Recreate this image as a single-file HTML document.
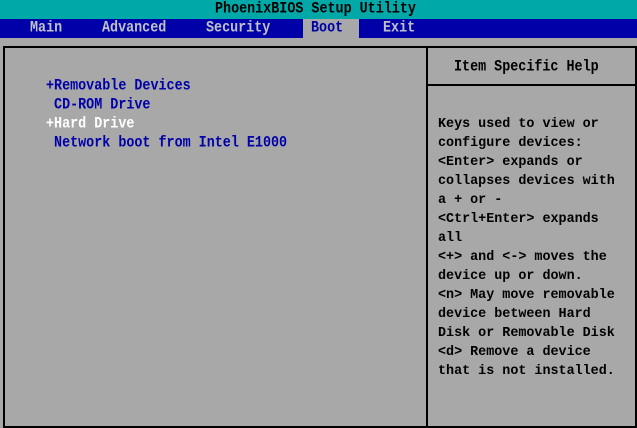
<!DOCTYPE html>
<html><head><style>
body{margin:0;width:637px;height:428px;background:#a8a8a8;position:relative;overflow:hidden;font-family:"Liberation Mono",monospace;font-size:13.4px;font-weight:bold;}
div{position:absolute;white-space:pre;line-height:19px;}
.t{left:0;top:0;width:637px;height:19px;background:#00a8a8;}
.m{left:0;top:19px;width:637px;height:19px;background:#0000a8;}
.b{border:2px solid #000;}
.l{color:#0000a8}
.h{color:#000}
.s{transform:scaleY(1.15);transform-origin:0 50%;}
</style></head><body>
<div class="t"></div>
<div class="s" style="left:215px;top:0;color:#000">PhoenixBIOS Setup Utility</div>
<div class="m"></div>
<div style="left:303px;top:19px;width:56px;height:19px;background:#a8a8a8"></div>
<div class="s" style="left:30px;top:19px;color:#c0c0c8">Main</div>
<div class="s" style="left:102px;top:19px;color:#c0c0c8">Advanced</div>
<div class="s" style="left:206px;top:19px;color:#c0c0c8">Security</div>
<div class="s" style="left:311px;top:19px;color:#0000a8">Boot</div>
<div class="s" style="left:383px;top:19px;color:#c0c0c8">Exit</div>
<div class="b" style="left:3px;top:46px;width:630px;height:378px;"></div>
<div style="left:426px;top:46px;width:2px;height:382px;background:#000"></div>
<div style="left:426px;top:84px;width:209px;height:2px;background:#000"></div>
<div class="s" style="left:454px;top:58px;color:#000">Item Specific Help</div>
<div class="l s" style="left:46px;top:77px">+Removable Devices</div>
<div class="l s" style="left:46px;top:96px"> CD-ROM Drive</div>
<div class="s" style="left:46px;top:115px;color:#fff">+Hard Drive</div>
<div class="l s" style="left:46px;top:134px"> Network boot from Intel E1000</div>
<div class="h" style="left:438px;top:115px;line-height:19px">Keys used to view or
configure devices:
&lt;Enter&gt; expands or
collapses devices with
a + or -
&lt;Ctrl+Enter&gt; expands
all
&lt;+&gt; and &lt;-&gt; moves the
device up or down.
&lt;n&gt; May move removable
device between Hard
Disk or Removable Disk
&lt;d&gt; Remove a device
that is not installed.</div>
</body></html>
